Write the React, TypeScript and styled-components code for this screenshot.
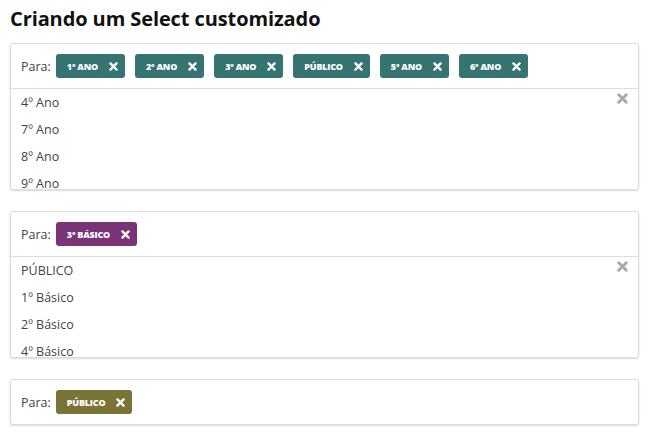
import React from 'react'
import styled, { createGlobalStyle } from 'styled-components'

const GlobalStyle = createGlobalStyle`
  body {
    margin: 0;
    background: #fff;
    font-family: 'Open Sans', 'Noto Sans', sans-serif;
    color: #333;
  }
`

const Page = styled.div`
  padding: 0 10px;
`

const Title = styled.h1`
  margin: 0;
  padding-top: 5px;
  height: 38px;
  font-size: 20px;
  font-weight: 700;
  color: #111;
  letter-spacing: -0.1px;
`

const Box = styled.div`
  border: 1px solid #dcdcdc;
  border-radius: 3px;
  box-shadow: 0 1px 2px rgba(0, 0, 0, 0.15);
  margin-bottom: 21px;
  background: #fff;
`

const Header = styled.div`
  display: flex;
  align-items: center;
  gap: 10px;
  height: 44px;
  padding: 0 10px;
`

const Label = styled.span`
  font-size: 12.5px;
  color: #444;
  margin-right: -5px;
`

const Tag = styled.span<{ $color: string }>`
  display: inline-flex;
  align-items: center;
  height: 24px;
  padding: 0 7px 0 11px;
  border-radius: 3px;
  background: ${p => p.$color};
  color: #fff;
  font-size: 9px;
  font-weight: 800;
  text-transform: uppercase;
  letter-spacing: -0.2px;

  svg {
    margin-left: 11px;
  }
`

const List = styled.div`
  position: relative;
  border-top: 1px solid #dcdcdc;
  height: 100px;
  overflow: hidden;
`

const Item = styled.div`
  height: 27px;
  line-height: 27px;
  padding: 0 10px;
  font-size: 12.5px;
  color: #444;
`

const Clear = styled.span`
  position: absolute;
  top: 4px;
  right: 10px;
  color: #a8a8a8;
  line-height: 0;
`

function Cross({ size = 9 }: { size?: number }) {
  return (
    <svg width={size} height={size} viewBox="0 0 10 10">
      <path
        d="M1.6 1.6 L8.4 8.4 M8.4 1.6 L1.6 8.4"
        stroke="currentColor"
        strokeWidth="2.6"
        strokeLinecap="round"
        fill="none"
      />
    </svg>
  )
}

type SelectProps = {
  color: string
  tags: string[]
  options?: string[]
}

function Select({ color, tags, options }: SelectProps) {
  return (
    <Box>
      <Header>
        <Label>Para:</Label>
        {tags.map(t => (
          <Tag key={t} $color={color}>
            {t}
            <Cross />
          </Tag>
        ))}
      </Header>
      {options && (
        <List>
          <Clear>
            <Cross size={11} />
          </Clear>
          {options.map(o => (
            <Item key={o}>{o}</Item>
          ))}
        </List>
      )}
    </Box>
  )
}

export default function App() {
  return (
    <Page>
      <GlobalStyle />
      <Title>Criando um Select customizado</Title>
      <Select
        color="#367471"
        tags={['1º Ano', '2º Ano', '3º Ano', 'Público', '5º Ano', '6º Ano']}
        options={['4º Ano', '7º Ano', '8º Ano', '9º Ano']}
      />
      <Select
        color="#7a3377"
        tags={['3º Básico']}
        options={['PÚBLICO', '1º Básico', '2º Básico', '4º Básico']}
      />
      <Select color="#7a7336" tags={['Público']} />
    </Page>
  )
}
